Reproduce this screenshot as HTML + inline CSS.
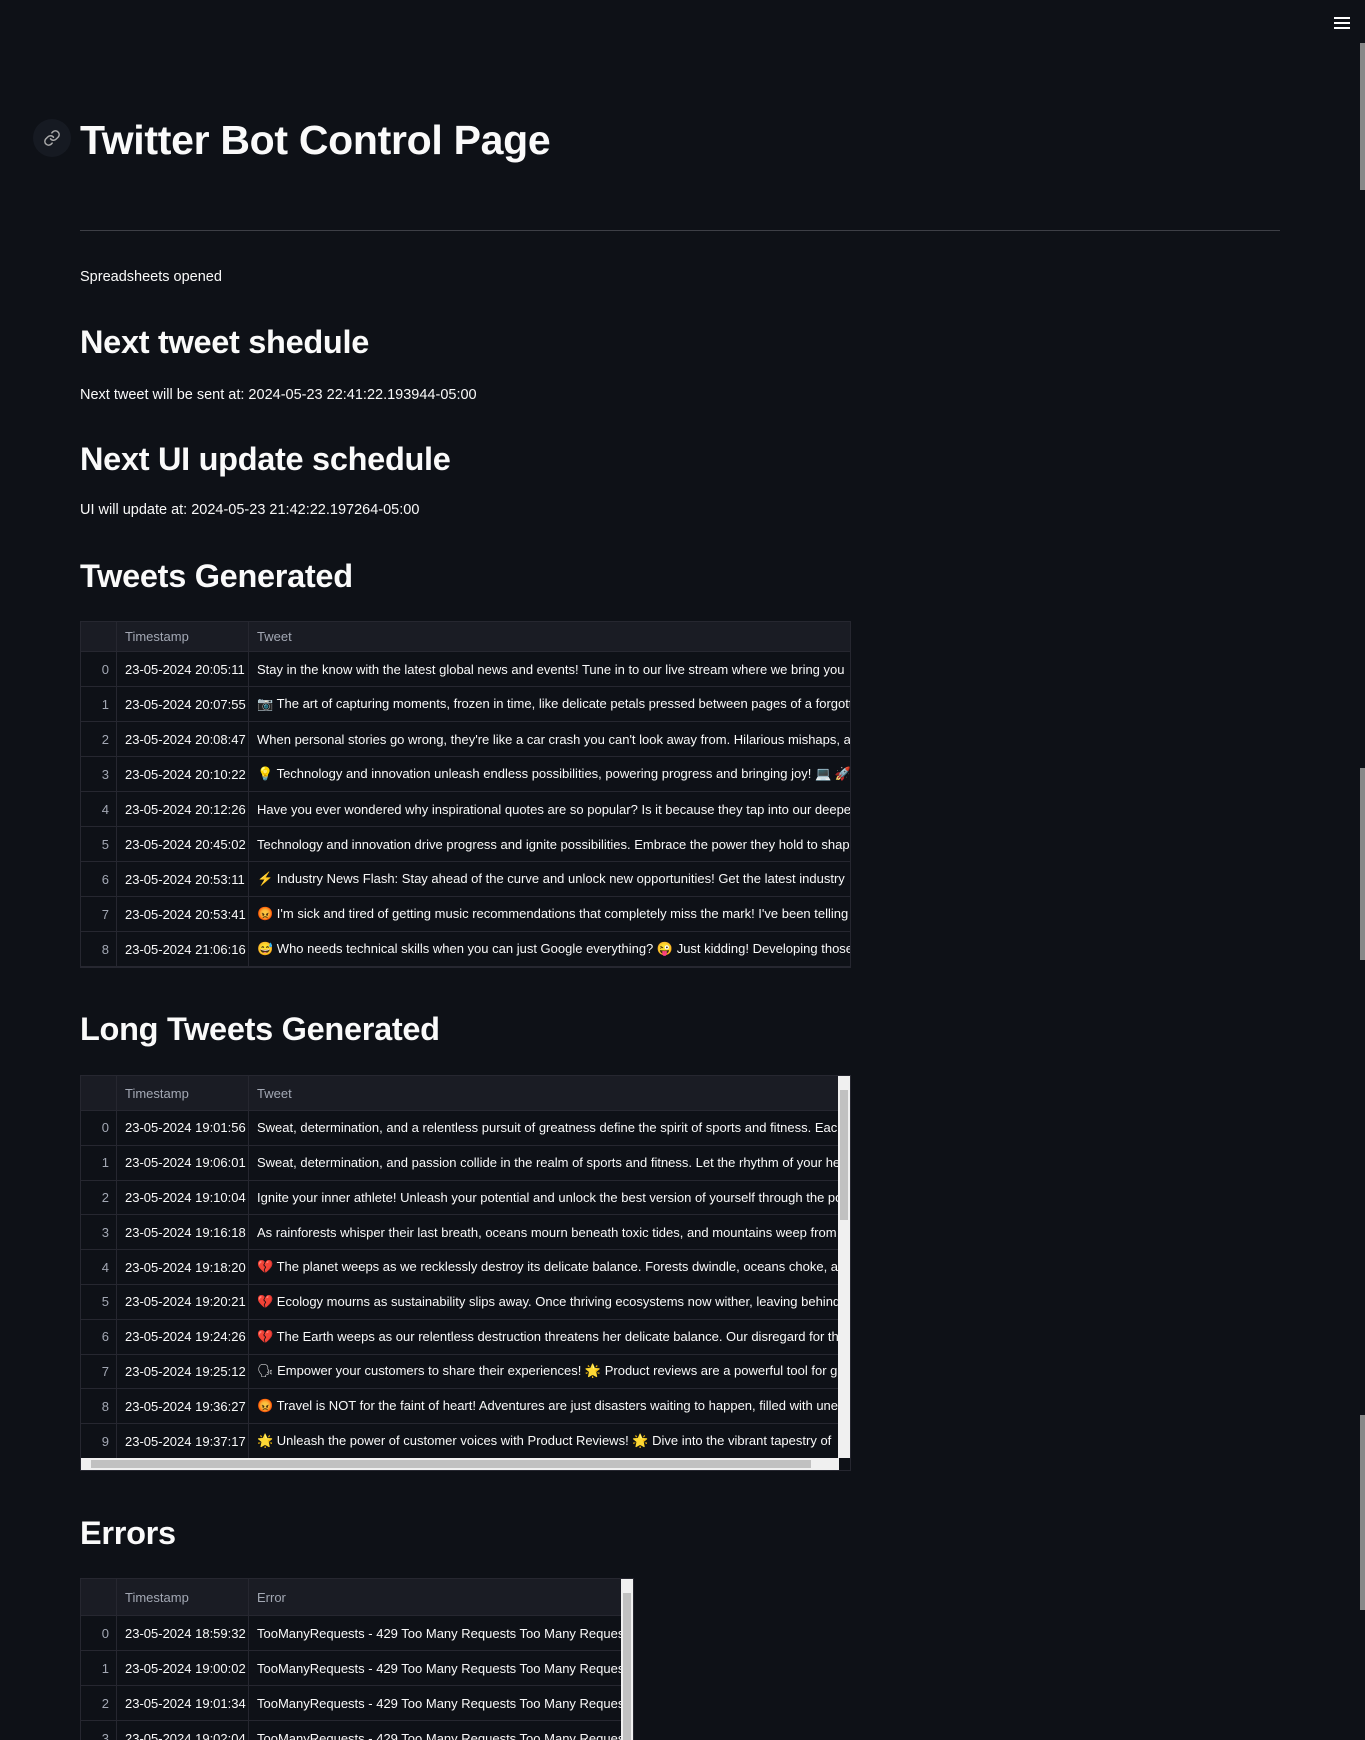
<!DOCTYPE html>
<html style="overflow:hidden;height:1740px"><head><meta charset="utf-8"><style>
body{margin:0;background:#0e1117;width:1365px;height:1740px;overflow:hidden;position:relative;font-family:"Liberation Sans","Noto Sans CJK SC",sans-serif;color:#fafafa}
.a{position:absolute}
h1,h2{margin:0;font-weight:700;position:absolute;left:80px;letter-spacing:-0.3px}
h1{font-size:41px;top:117px}
h2{font-size:32.5px}
p{margin:0;position:absolute;left:80px;font-size:14.5px}
.t{position:absolute;left:80px;border:1px solid #262730;overflow:hidden;background:#0e1117}
.r{display:flex;height:35px;border-bottom:1px solid #262730;box-sizing:border-box;font-size:13px;align-items:center;white-space:nowrap}
.h{background:#1a1c24;color:#a3a8b4}
.c0{width:36px;flex:none;text-align:right;padding-right:7px;box-sizing:border-box;color:#a3a8b4;height:100%;display:flex;align-items:center;justify-content:flex-end;border-right:1px solid #262730}
.c1{width:132px;flex:none;padding-left:8px;box-sizing:border-box;height:100%;display:flex;align-items:center;border-right:1px solid #262730}
.c2{padding-left:8px;flex:1;overflow:hidden;height:100%;display:flex;align-items:center}
.h .c1,.h .c2{color:#a3a8b4}
.vs{position:absolute;background:#f0f0f0;width:12px}
.vs i{position:absolute;left:2px;right:2px;background:#c1c1c1}
.t2 .r{height:34.8px}
</style></head><body>
<div class="a" style="left:1334px;top:17px;width:16px;height:2px;background:#fff;box-shadow:0 5px 0 #fff,0 10px 0 #fff"></div>
<div class="a" style="left:1360px;top:43px;width:5px;height:147px;background:#888"></div>
<div class="a" style="left:1360px;top:768px;width:5px;height:192px;background:#888"></div>
<div class="a" style="left:1360px;top:1415px;width:5px;height:195px;background:#888"></div>
<div class="a" style="left:33px;top:119px;width:38px;height:38px;border-radius:50%;background:#161a22"></div>
<svg class="a" style="left:43px;top:129px" width="18" height="18" viewBox="0 0 24 24" fill="none" stroke="#aaa" stroke-width="2" stroke-linecap="round"><path d="M10 13a5 5 0 0 0 7.5.5l3-3a5 5 0 0 0-7-7l-1.7 1.7"/><path d="M14 11a5 5 0 0 0-7.5-.5l-3 3a5 5 0 0 0 7 7l1.7-1.7"/></svg>
<h1>Twitter Bot Control Page</h1>
<div class="a" style="left:80px;top:230px;width:1200px;height:1px;background:#3d3f46"></div>
<p style="top:269px">Spreadsheets opened</p>
<h2 style="top:324px">Next tweet shedule</h2>
<p style="top:387px">Next tweet will be sent at: 2024-05-23 22:41:22.193944-05:00</p>
<h2 style="top:441px">Next UI update schedule</h2>
<p style="top:502px">UI will update at: 2024-05-23 21:42:22.197264-05:00</p>
<h2 style="top:558px">Tweets Generated</h2>
<div class="t" style="top:621px;width:769px;height:345px">
<div class="r h" style="height:30px"><div class="c0"></div><div class="c1">Timestamp</div><div class="c2">Tweet</div></div>
<div class="r"><div class="c0">0</div><div class="c1">23-05-2024 20:05:11</div><div class="c2">Stay in the know with the latest global news and events! Tune in to our live stream where we bring you</div></div>
<div class="r"><div class="c0">1</div><div class="c1">23-05-2024 20:07:55</div><div class="c2">📷 The art of capturing moments, frozen in time, like delicate petals pressed between pages of a forgotten</div></div>
<div class="r"><div class="c0">2</div><div class="c1">23-05-2024 20:08:47</div><div class="c2">When personal stories go wrong, they're like a car crash you can't look away from. Hilarious mishaps, a</div></div>
<div class="r"><div class="c0">3</div><div class="c1">23-05-2024 20:10:22</div><div class="c2">💡 Technology and innovation unleash endless possibilities, powering progress and bringing joy! 💻 🚀</div></div>
<div class="r"><div class="c0">4</div><div class="c1">23-05-2024 20:12:26</div><div class="c2">Have you ever wondered why inspirational quotes are so popular? Is it because they tap into our deepest</div></div>
<div class="r"><div class="c0">5</div><div class="c1">23-05-2024 20:45:02</div><div class="c2">Technology and innovation drive progress and ignite possibilities. Embrace the power they hold to shape</div></div>
<div class="r"><div class="c0">6</div><div class="c1">23-05-2024 20:53:11</div><div class="c2">⚡ Industry News Flash: Stay ahead of the curve and unlock new opportunities! Get the latest industry</div></div>
<div class="r"><div class="c0">7</div><div class="c1">23-05-2024 20:53:41</div><div class="c2">😡 I'm sick and tired of getting music recommendations that completely miss the mark! I've been telling</div></div>
<div class="r"><div class="c0">8</div><div class="c1">23-05-2024 21:06:16</div><div class="c2">😅 Who needs technical skills when you can just Google everything? 😜 Just kidding! Developing those</div></div>
</div>
<h2 style="top:1011px">Long Tweets Generated</h2>
<div class="t t2" style="top:1075px;width:769px;height:394px">
<div class="r h" style="height:35px;width:758px"><div class="c0"></div><div class="c1">Timestamp</div><div class="c2">Tweet</div></div>
<div style="width:758px">
<div class="r"><div class="c0">0</div><div class="c1">23-05-2024 19:01:56</div><div class="c2">Sweat, determination, and a relentless pursuit of greatness define the spirit of sports and fitness. Each</div></div>
<div class="r"><div class="c0">1</div><div class="c1">23-05-2024 19:06:01</div><div class="c2">Sweat, determination, and passion collide in the realm of sports and fitness. Let the rhythm of your heart</div></div>
<div class="r"><div class="c0">2</div><div class="c1">23-05-2024 19:10:04</div><div class="c2">Ignite your inner athlete! Unleash your potential and unlock the best version of yourself through the power</div></div>
<div class="r"><div class="c0">3</div><div class="c1">23-05-2024 19:16:18</div><div class="c2">As rainforests whisper their last breath, oceans mourn beneath toxic tides, and mountains weep from</div></div>
<div class="r"><div class="c0">4</div><div class="c1">23-05-2024 19:18:20</div><div class="c2">💔 The planet weeps as we recklessly destroy its delicate balance. Forests dwindle, oceans choke, and</div></div>
<div class="r"><div class="c0">5</div><div class="c1">23-05-2024 19:20:21</div><div class="c2">💔 Ecology mourns as sustainability slips away. Once thriving ecosystems now wither, leaving behind</div></div>
<div class="r"><div class="c0">6</div><div class="c1">23-05-2024 19:24:26</div><div class="c2">💔 The Earth weeps as our relentless destruction threatens her delicate balance. Our disregard for the</div></div>
<div class="r"><div class="c0">7</div><div class="c1">23-05-2024 19:25:12</div><div class="c2">🗣 Empower your customers to share their experiences! 🌟 Product reviews are a powerful tool for growth</div></div>
<div class="r"><div class="c0">8</div><div class="c1">23-05-2024 19:36:27</div><div class="c2">😡 Travel is NOT for the faint of heart! Adventures are just disasters waiting to happen, filled with unexpected</div></div>
<div class="r"><div class="c0">9</div><div class="c1">23-05-2024 19:37:17</div><div class="c2">🌟 Unleash the power of customer voices with Product Reviews! 🌟 Dive into the vibrant tapestry of</div></div>
</div>
<div class="vs" style="right:0;top:0;height:382px"><i style="top:14px;height:130px"></i></div>
<div class="a" style="left:0;bottom:0;width:758px;height:12px;background:#f0f0f0"><div class="a" style="left:10px;top:2px;width:720px;height:8px;background:#c1c1c1"></div></div>
</div>
<h2 style="top:1515px">Errors</h2>
<div class="t" style="top:1578px;width:552px;height:162px;border-bottom:none">
<div style="width:541px">
<div class="r h" style="height:37px"><div class="c0"></div><div class="c1">Timestamp</div><div class="c2">Error</div></div>
<div class="r"><div class="c0">0</div><div class="c1">23-05-2024 18:59:32</div><div class="c2">TooManyRequests - 429 Too Many Requests Too Many Requests</div></div>
<div class="r"><div class="c0">1</div><div class="c1">23-05-2024 19:00:02</div><div class="c2">TooManyRequests - 429 Too Many Requests Too Many Requests</div></div>
<div class="r"><div class="c0">2</div><div class="c1">23-05-2024 19:01:34</div><div class="c2">TooManyRequests - 429 Too Many Requests Too Many Requests</div></div>
<div class="r"><div class="c0">3</div><div class="c1">23-05-2024 19:02:04</div><div class="c2">TooManyRequests - 429 Too Many Requests Too Many Requests</div></div>
</div>
<div class="vs" style="right:0;top:0;height:162px"><i style="top:14px;height:148px"></i></div>
</div>
</body></html>
